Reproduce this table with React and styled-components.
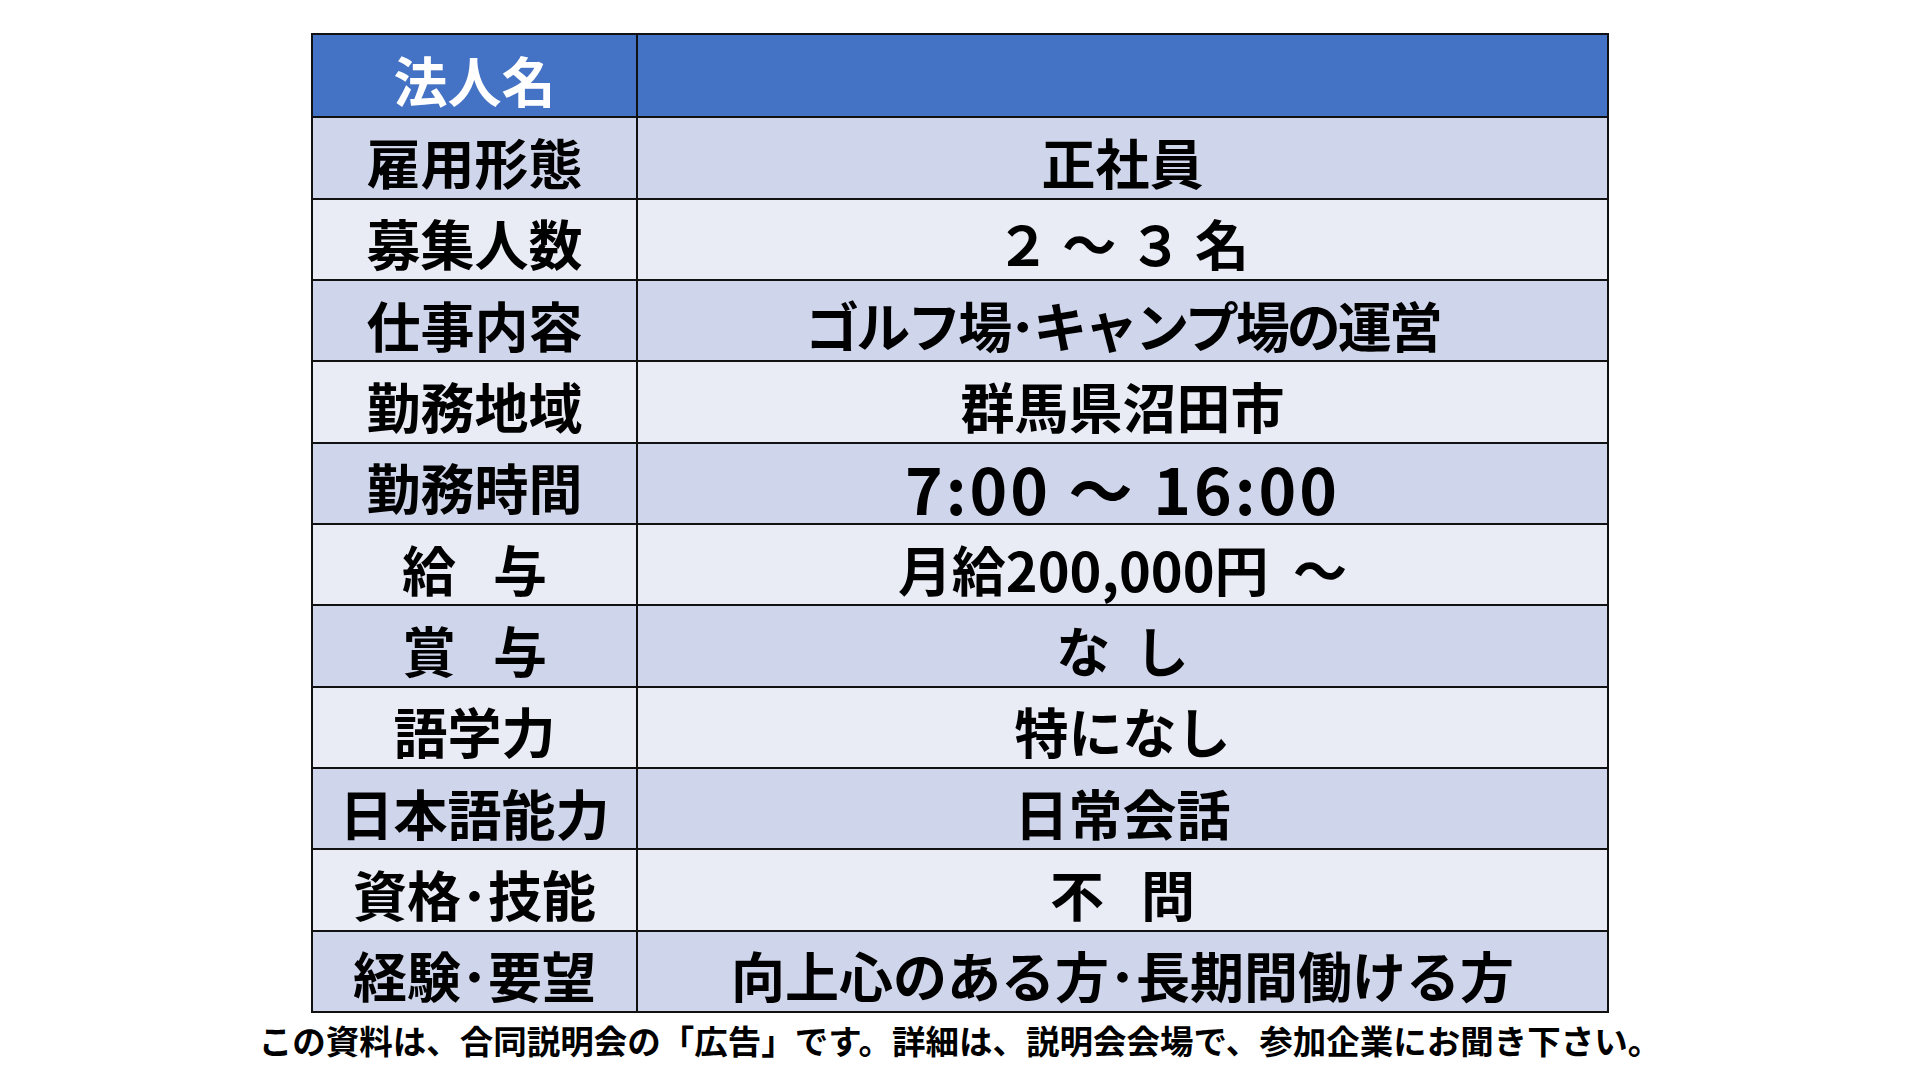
import React from 'react';
import styled, { createGlobalStyle } from 'styled-components';

const GlobalStyle = createGlobalStyle`
  html, body {
    margin: 0;
    padding: 0;
    background: #ffffff;
  }
  body {
    font-family: "Noto Sans CJK JP", "Noto Sans", sans-serif;
  }
`;

const rows = [
    { label: '雇用形態', value: '正社員' },
    { label: '募集人数', value: '２ ～ ３ 名' },
    { label: '仕事内容', value: 'ゴルフ場･キャンプ場の運営', tight: true },
    { label: '勤務地域', value: '群馬県沼田市' },
    { label: '勤務時間', value: '7:00 ～ 16:00', big: true },
    { label: '給\u00a0\u00a0\u00a0与', value: '月給200,000円\u00a0\u00a0～' },
    { label: '賞\u00a0\u00a0\u00a0与', value: 'な\u00a0\u00a0し' },
    { label: '語学力', value: '特になし' },
    { label: '日本語能力', value: '日常会話' },
    { label: '資格･技能', value: '不\u00a0\u00a0\u00a0問' },
    { label: '経験･要望', value: '向上心のある方･長期間働ける方' },
];

const App = () => {
    return (
        <Page>
            <GlobalStyle />
            <Table>
                <Row $header>
                    <LabelCell $header>法人名</LabelCell>
                    <ValueCell />
                </Row>
                {rows.map((row, i) => (
                    <Row key={row.label} $dark={i % 2 === 0}>
                        <LabelCell>{row.label}</LabelCell>
                        <ValueCell $big={row.big} $tight={row.tight}>{row.value}</ValueCell>
                    </Row>
                ))}
            </Table>
            <Notice>この資料は、合同説明会の「広告」です。詳細は、説明会会場で、参加企業にお聞き下さい。</Notice>
        </Page>
    );
};

const Page = styled.div`
  width: 1920px;
  height: 1080px;
  display: flex;
  flex-direction: column;
  align-items: center;
  padding-top: 33px;
  box-sizing: border-box;
`;

const Table = styled.div`
  width: 1298px;
  height: 980px;
  box-sizing: border-box;
  border: 2px solid #111;
  display: grid;
  grid-template-rows: repeat(12, 1fr);
`;

const Row = styled.div`
  display: grid;
  grid-template-columns: 323px 1fr;
  background-color: ${p => (p.$header ? '#4472C4' : p.$dark ? '#CFD5EA' : '#E9EBF5')};
  border-top: 2px solid #111;

  &:first-child {
    border-top: none;
  }
`;

const Cell = styled.div`
  display: flex;
  align-items: center;
  justify-content: center;
  padding-top: 8px;
  box-sizing: border-box;
  font-weight: 700;
  white-space: pre;
  line-height: 1;
`;

const LabelCell = styled(Cell)`
  font-size: 54px;
  color: ${p => (p.$header ? '#ffffff' : '#000000')};
`;

const ValueCell = styled(Cell)`
  border-left: 2px solid #111;
  font-size: ${p => (p.$big ? '64px' : '54px')};
  letter-spacing: ${p => (p.$big ? '3px' : p.$tight ? '-3px' : '0')};
  color: #000000;
`;

const Notice = styled.div`
  margin-top: 10px;
  font-size: 33.5px;
  font-weight: 700;
  color: #000000;
  white-space: nowrap;
  line-height: 1;
`;

export default App;
